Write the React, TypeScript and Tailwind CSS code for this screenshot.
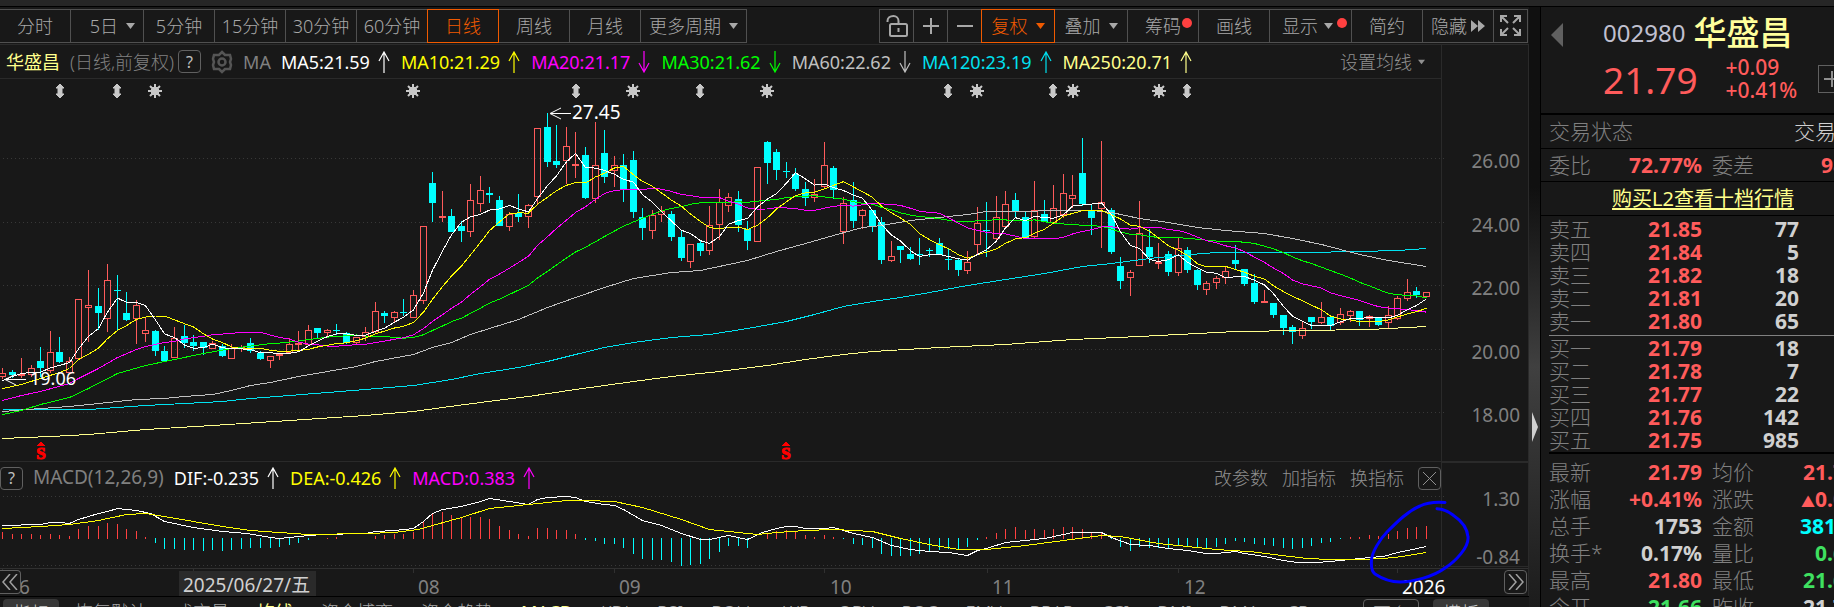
import type { ReactNode } from 'react';

// [涨跌(1 涨 / 0 跌), 最高, 实体上沿, 实体下沿, 最低]，均为图表坐标
type Candle = [number, number, number, number, number];
type Point = [number, number];

const CANDLES: Candle[] = [
  [1, 368, 373, 377, 379], [0, 370, 372, 375, 378], [1, 358, 374, 375, 378], [1, 365, 368, 375, 377], [0, 347, 361, 368, 377],
  [1, 331, 352, 371, 373], [0, 337, 352, 362, 363], [1, 357, 361, 373, 373], [1, 299, 299, 359, 359], [1, 270, 305, 308, 342],
  [0, 288, 306, 313, 330], [1, 264, 280, 319, 332], [0, 275, 290, 291, 330], [0, 292, 313, 320, 321], [1, 300, 305, 319, 344],
  [1, 318, 330, 334, 342], [0, 330, 331, 351, 356], [0, 346, 351, 361, 361], [1, 327, 338, 358, 358], [0, 325, 336, 343, 348],
  [0, 335, 342, 346, 351], [0, 342, 342, 348, 355], [1, 341, 343, 349, 349], [0, 344, 346, 356, 357], [1, 344, 348, 359, 359],
  [1, 345, 347, 348, 352], [0, 338, 343, 351, 353], [0, 351, 353, 359, 360], [1, 356, 356, 361, 368], [1, 353, 354, 356, 360],
  [1, 338, 344, 353, 354], [1, 331, 343, 344, 352], [1, 325, 330, 345, 345], [0, 328, 328, 333, 338], [1, 329, 330, 333, 336],
  [0, 324, 330, 331, 335], [0, 332, 333, 343, 344], [1, 337, 337, 343, 344], [1, 327, 332, 337, 341], [1, 302, 311, 332, 333],
  [0, 311, 313, 316, 323], [1, 311, 312, 318, 322], [0, 299, 312, 313, 316], [1, 290, 295, 318, 318], [1, 226, 226, 301, 304],
  [0, 172, 183, 203, 222], [1, 191, 216, 217, 222], [0, 209, 216, 232, 232], [0, 221, 226, 231, 242], [1, 184, 200, 232, 237],
  [1, 176, 190, 204, 212], [0, 187, 193, 195, 203], [0, 196, 200, 226, 226], [1, 212, 214, 227, 231], [0, 194, 213, 217, 222],
  [1, 204, 205, 217, 228], [1, 128, 128, 197, 204], [0, 113, 127, 162, 167], [0, 125, 161, 165, 168], [1, 127, 146, 161, 184],
  [1, 132, 164, 166, 178], [0, 147, 155, 198, 199], [1, 122, 165, 199, 203], [0, 130, 153, 177, 183], [1, 156, 165, 171, 187],
  [0, 154, 165, 189, 202], [0, 151, 160, 212, 218], [0, 208, 217, 228, 240], [1, 210, 215, 231, 239], [1, 206, 211, 215, 222],
  [0, 211, 214, 237, 241], [0, 231, 237, 258, 261], [1, 244, 244, 262, 268], [0, 240, 243, 251, 256], [1, 206, 225, 251, 255],
  [1, 189, 202, 225, 240], [1, 193, 197, 206, 212], [0, 191, 199, 225, 232], [0, 221, 229, 241, 250], [1, 167, 167, 242, 242],
  [0, 141, 142, 163, 184], [0, 149, 152, 170, 180], [0, 162, 171, 172, 178], [0, 168, 174, 189, 191], [0, 182, 189, 198, 206],
  [1, 179, 194, 198, 202], [1, 142, 165, 187, 188], [0, 166, 168, 190, 199], [1, 197, 203, 232, 244], [0, 182, 200, 221, 228],
  [1, 209, 210, 216, 229], [0, 210, 210, 226, 232], [0, 217, 222, 260, 264], [1, 241, 256, 261, 262], [0, 246, 246, 250, 263],
  [0, 247, 254, 259, 260], [0, 238, 254, 255, 265], [0, 248, 250, 251, 257], [0, 238, 243, 255, 255], [0, 249, 259, 260, 270],
  [0, 259, 260, 270, 276], [1, 251, 262, 271, 274], [1, 207, 223, 245, 255], [0, 202, 230, 231, 257], [1, 196, 217, 239, 242],
  [1, 191, 204, 227, 228], [0, 193, 200, 211, 218], [0, 212, 217, 238, 238], [1, 181, 210, 237, 238], [0, 200, 214, 222, 222],
  [1, 185, 208, 223, 224], [1, 174, 193, 215, 218], [1, 175, 195, 199, 208], [0, 138, 173, 204, 206], [0, 205, 211, 218, 235],
  [1, 141, 202, 209, 248], [0, 208, 210, 252, 254], [0, 257, 266, 281, 289], [1, 270, 272, 278, 296], [1, 201, 233, 266, 266],
  [0, 229, 247, 257, 263], [1, 243, 262, 264, 269], [0, 251, 254, 272, 276], [1, 238, 248, 273, 276], [0, 247, 250, 270, 273],
  [0, 269, 270, 285, 290], [1, 281, 283, 290, 295], [1, 276, 278, 283, 289], [1, 267, 271, 278, 284], [0, 245, 260, 264, 269],
  [0, 269, 269, 284, 286], [0, 274, 283, 302, 304], [1, 290, 301, 302, 302], [0, 303, 303, 315, 318], [0, 315, 315, 328, 335],
  [0, 325, 327, 332, 344], [1, 322, 328, 336, 339], [0, 317, 317, 322, 329], [1, 302, 317, 323, 324], [0, 316, 317, 326, 330],
  [1, 308, 314, 323, 325], [1, 310, 311, 316, 322], [0, 311, 311, 320, 326], [1, 315, 316, 319, 327], [0, 317, 318, 325, 326],
  [1, 306, 315, 323, 328], [1, 296, 298, 319, 320], [1, 279, 292, 299, 301], [0, 287, 291, 295, 298], [1, 292, 292, 297, 297],
];

// 均线起始段（窗口左侧数据不足时使用）
const MA5_HEAD: Point[] = [[0, 380], [1, 376], [2, 373], [3, 372]];
const MA10_HEAD: Point[] = [[0, 388], [2, 384], [4, 378], [6, 372], [7, 368], [8, 359]];
const MA20_HEAD: Point[] = [[0, 400], [2, 395], [4, 391], [7, 383], [8, 378], [10, 368], [12, 357], [14, 349], [15, 346], [17, 342], [18, 341]];
const MA30_HEAD: Point[] = [[0, 414], [2, 410], [4, 404], [7, 397], [9, 388], [12, 373], [15, 365], [18, 359], [21, 353], [24, 348], [28, 343]];

const MA60: Point[] = [
  [0, 411], [4, 408], [7, 406], [10, 403], [14, 399], [17, 398], [19, 396], [22, 394], [24, 390], [26, 385], [28, 382], [31, 376],
  [34, 371], [37, 366], [39, 361], [43, 354], [45, 347], [47, 342], [49, 334], [51, 328], [54, 319], [57, 307], [60, 297], [63, 287],
  [66, 278], [70, 272], [73, 270], [76, 264], [78, 260], [81, 251], [84, 243], [87, 235], [90, 227], [92, 225], [95, 220], [98, 217],
  [101, 214], [103, 211], [114, 210], [116, 212], [119, 218], [122, 222], [125, 227], [128, 230], [132, 233], [135, 238], [138, 244],
  [142, 254], [145, 260], [147, 263], [149, 266],
];
const MA120: Point[] = [
  [0, 409], [9, 409], [12, 407], [15, 405], [19, 403], [23, 401], [26, 398], [30, 395], [34, 392], [38, 389], [43, 385], [47, 379],
  [50, 373], [54, 367], [57, 361], [60, 354], [63, 347], [66, 342], [70, 337], [74, 334], [78, 328], [82, 321], [85, 314], [88, 306],
  [91, 301], [94, 297], [97, 292], [101, 285], [105, 279], [109, 273], [113, 266], [116, 263], [120, 258], [123, 255], [127, 252],
  [136, 252], [142, 251], [146, 250], [149, 248],
];
const MA250: Point[] = [
  [0, 438], [5, 436], [9, 434], [15, 429], [22, 425], [30, 420], [38, 415], [43, 411], [46, 407], [50, 402], [55, 396], [60, 389],
  [66, 381], [70, 376], [75, 371], [80, 365], [84, 359], [88, 354], [91, 351], [98, 347], [105, 344], [112, 339], [119, 336],
  [125, 333], [129, 331], [136, 330], [143, 329], [149, 326],
];

const MACD_BARS = [
  7, 5, 5, 5, 4, 5, 4, 3, 10, 13, 13, 16, 15, 10, 8, 2, -5, -11, -11, -12, -12, -13, -12, -13, -12, -11, -10, -10, -10, -9,
  -7, -5, -2, 0, 1, 2, 0, 0, 0, 3, 4, 5, 5, 7, 17, 25, 27, 24, 21, 22, 22, 20, 13, 9, 5, 3, 11, 11, 9, 9,
  5, -2, -3, -6, -6, -10, -16, -21, -22, -22, -24, -28, -27, -26, -21, -14, -8, -8, -10, 0, 6, 8, 9, 7, 4, 2, 4, 2, -1, -6,
  -7, -10, -16, -18, -18, -18, -16, -14, -12, -11, -11, -9, -2, 2, 6, 10, 12, 9, 10, 9, 10, 12, 12, 10, 7, 7, -1, -9, -13, -9,
  -10, -10, -11, -8, -8, -10, -10, -9, -6, -3, -4, -6, -7, -8, -10, -11, -10, -8, -5, -4, -1, 2, 2, 4, 3, 5, 8, 11, 12, 13,
];
const DIF: Point[] = [
  [0, 525], [4, 524], [5, 522], [6, 522], [7, 523], [8, 519], [10, 513], [11, 511], [12, 508], [14, 510], [15.5, 513], [17, 521],
  [20, 527], [23, 531], [25.5, 533], [28, 537], [29, 538], [31, 536], [33.5, 534], [38, 533], [39, 531], [41, 530], [43, 528],
  [44, 521], [45, 513], [46, 509], [48, 506], [50, 501], [51, 498], [53, 501], [55, 504], [56, 499], [57, 497], [59, 496], [60, 497],
  [61, 501], [63, 504], [64, 505], [65, 509], [67, 520], [69, 525], [71, 533], [73, 539], [74, 539], [76, 535], [78, 539], [79.5, 532],
  [81, 528], [82, 526], [83, 526], [84, 528], [86, 528], [87, 527], [89, 533], [91, 537], [93, 545], [95, 549], [97, 551], [99, 552],
  [101, 555], [102, 550], [103, 548], [105, 542], [108, 539], [109, 538], [111, 534], [112, 532], [115, 532], [116, 537], [118, 544],
  [120, 545], [122, 548], [124, 550], [126, 553], [127, 553], [129, 551], [130, 553], [132, 556], [134, 560], [135.5, 562],
  [137.5, 562], [139, 561], [141, 559], [143, 557], [144.5, 556], [146, 552], [147, 550], [149, 546],
];
const DEA: Point[] = [
  [0, 528], [4, 526], [7, 524], [10, 520], [13, 514], [15, 513], [17, 516], [20, 521], [23, 526], [26, 530], [29, 532], [32, 534],
  [38, 533], [41, 532], [43.5, 529], [45, 525], [48, 517], [51, 508], [54, 505], [57, 502], [59, 500], [61, 500], [64, 501], [67, 507],
  [71, 519], [74, 529], [77, 532], [79, 534], [81, 532], [84, 530], [87, 529], [89, 530], [91, 531], [94, 538], [97, 544], [100, 549],
  [103, 549], [107, 545], [111, 540], [115, 535], [117, 536], [121, 543], [124, 546], [127, 549], [128.5, 550], [130.5, 551],
  [133, 554], [136.5, 558], [139, 559], [142, 559], [144.5, 558], [146.5, 556], [149, 552],
];

const xAt = (i: number) => Math.round(2 + 9.557 * i) + 0.5;
const toPoints = (pts: Point[]) => pts.map(([i, y]) => `${xAt(i)},${y + 0.5}`).join(' ');

const closes = CANDLES.map(([up, , top, bottom]) => (up ? top : bottom));

function movingAverage(n: number, head: Point[]): Point[] {
  const out = [...head];
  for (let i = n - 1; i < closes.length; i++) {
    const sum = closes.slice(i - n + 1, i + 1).reduce((a, b) => a + b, 0);
    out.push([i, sum / n]);
  }
  return out;
}

const LINES: { color: string; points: Point[] }[] = [
  { color: '#ffff8c', points: MA250 },
  { color: '#00e1f0', points: MA120 },
  { color: '#c0c0c0', points: MA60 },
  { color: '#00ff00', points: movingAverage(30, MA30_HEAD) },
  { color: '#ff00ff', points: movingAverage(20, MA20_HEAD) },
  { color: '#ffff00', points: movingAverage(10, MA10_HEAD) },
  { color: '#ffffff', points: movingAverage(5, MA5_HEAD) },
];

const STARS = [155, 413, 633, 767, 977, 1073, 1159];
const DOUBLE_ARROWS = [60, 117, 576, 700, 948, 1053, 1187];

const MA_LEGEND = [
  { text: 'MA5:21.59', up: true, cls: 'text-white' },
  { text: 'MA10:21.29', up: true, cls: 'text-[#ffff00]' },
  { text: 'MA20:21.17', up: false, cls: 'text-[#ff00ff]' },
  { text: 'MA30:21.62', up: false, cls: 'text-[#00ff00]' },
  { text: 'MA60:22.62', up: false, cls: 'text-[#c0c0c0]' },
  { text: 'MA120:23.19', up: true, cls: 'text-[#00e1f0]' },
  { text: 'MA250:20.71', up: true, cls: 'text-[#ffff8c]' },
];

const MACD_LEGEND = [
  { text: 'DIF:-0.235', up: true, cls: 'text-white' },
  { text: 'DEA:-0.426', up: true, cls: 'text-[#ffff00]' },
  { text: 'MACD:0.383', up: true, cls: 'text-[#ff00ff]' },
];

const SELLS = [['卖五', '21.85', '77'], ['卖四', '21.84', '5'], ['卖三', '21.82', '18'], ['卖二', '21.81', '20'], ['卖一', '21.80', '65']];
const BUYS = [['买一', '21.79', '18'], ['买二', '21.78', '7'], ['买三', '21.77', '22'], ['买四', '21.76', '142'], ['买五', '21.75', '985']];

const RED = 'text-[#ff5b5b]';
const GREEN = 'text-[#3fe060]';
const LIGHT = 'text-[#d0d0d0]';
const STATS = [
  ['最新', '21.79', RED, '均价', '21.73', RED],
  ['涨幅', '+0.41%', RED, '涨跌', '▲0.09', RED],
  ['总手', '1753', LIGHT, '金额', '381万', 'text-[#00ffff]'],
  ['换手*', '0.17%', LIGHT, '量比', '0.62', GREEN],
  ['最高', '21.80', RED, '最低', '21.66', GREEN],
  ['今开', '21.66', GREEN, '昨收', '21.70', LIGHT],
];

const TABS = ['恢复默认', '成交量', '均线', '资金博弈', '资金趋势', 'MACD', 'KDJ', 'RSI', 'BOLL', 'WR', 'OBV', 'ROC', 'EMV', 'BRAR', 'CCI', 'DMI', 'DMA', 'CR'];

function Caret({ small }: { small?: boolean }) {
  return (
    <svg width={small ? 7 : 9} height={6} viewBox="0 0 9 6" fill="currentColor" className="shrink-0">
      <path d="M0 0h9L4.5 6z" />
    </svg>
  );
}

function TrendArrow({ up }: { up: boolean }) {
  return (
    <svg width={12} height={22} viewBox="0 0 12 22" fill="none" stroke="currentColor" strokeWidth={1.2} className="shrink-0">
      <path d={up ? 'M6 22V1M1 10L6 1l5 9' : 'M6 0v21M1 12l5 9 5-9'} />
    </svg>
  );
}

function ToolButton({ children, active, className }: { children: ReactNode; active?: boolean; className: string }) {
  return (
    <button
      type="button"
      className={`relative -ml-px flex h-[34px] shrink-0 items-center border ${active ? 'z-10 border-[#f05a00] text-[#f05a00]' : 'border-[#505050] text-[#a8a8a8]'} ${className}`}
    >
      {children}
    </button>
  );
}

function Toolbar() {
  return (
    <div className="flex h-[38px] items-center justify-between overflow-hidden border-b border-[#2a2a2a] pr-px">
      <div className="flex">
        <ToolButton className="w-[72px] justify-center">分时</ToolButton>
        <ToolButton className="w-[74px] justify-end gap-2 pr-2">5日 <Caret /></ToolButton>
        <ToolButton className="w-[72px] justify-center">5分钟</ToolButton>
        <ToolButton className="w-[72px] justify-center">15分钟</ToolButton>
        <ToolButton className="w-[72px] justify-center">30分钟</ToolButton>
        <ToolButton className="w-[72px] justify-center">60分钟</ToolButton>
        <ToolButton active className="w-[72px] justify-center">日线</ToolButton>
        <ToolButton className="w-[72px] justify-center">周线</ToolButton>
        <ToolButton className="w-[72px] justify-center">月线</ToolButton>
        <ToolButton className="w-[107px] justify-center gap-2">更多周期 <Caret /></ToolButton>
      </div>
      <div className="flex">
        <ToolButton className="w-[35px] justify-center">
          <svg width={22} height={24} viewBox="0 0 22 24" fill="none" stroke="currentColor" strokeWidth={2}>
            <rect x={4} y={10} width={17} height={12} rx={1.5} />
            <path d="M12.5 10V7a5 5 0 0 0-5-5C4 2 1.5 4 1.5 7v1M12.5 14v4" />
          </svg>
        </ToolButton>
        <ToolButton className="w-[35px] justify-center">
          <svg width={18} height={18} viewBox="0 0 18 18" stroke="currentColor" strokeWidth={2}><path d="M1 9h16M9 1v16" /></svg>
        </ToolButton>
        <ToolButton className="w-[35px] justify-center">
          <svg width={18} height={18} viewBox="0 0 18 18" stroke="currentColor" strokeWidth={2}><path d="M1 9h16" /></svg>
        </ToolButton>
        <ToolButton active className="w-[74px] justify-center gap-2">复权 <Caret /></ToolButton>
        <ToolButton className="w-[74px] justify-center gap-2">叠加 <Caret /></ToolButton>
        <ToolButton className="w-[72px] justify-center">
          筹码
          <span className="absolute top-2 right-1.5 h-2.5 w-2.5 rounded-full bg-[#ff4040]" />
        </ToolButton>
        <ToolButton className="w-[72px] justify-center">画线</ToolButton>
        <ToolButton className="w-[83px] gap-1.5 pl-3">
          显示 <Caret />
          <span className="absolute top-2 right-1 h-2.5 w-2.5 rounded-full bg-[#ff4040]" />
        </ToolButton>
        <ToolButton className="w-[72px] justify-center">简约</ToolButton>
        <ToolButton className="w-[72px] justify-center gap-1">
          隐藏
          <svg width={14} height={12} viewBox="0 0 14 12" fill="currentColor"><path d="M0 0l7 6-7 6zM7 0l7 6-7 6z" /></svg>
        </ToolButton>
        <ToolButton className="w-[35px] justify-center">
          <svg width={21} height={21} viewBox="0 0 21 21" fill="none" stroke="currentColor" strokeWidth={2}>
            <path d="M1 7V1h6M1 1l7 7M14 1h6v6M20 1l-7 7M1 14v6h6M1 20l7-7M20 14v6h-6M20 20l-7-7" />
          </svg>
        </ToolButton>
      </div>
    </div>
  );
}

function HelpButton() {
  return (
    <button type="button" className="h-[23px] w-[23px] shrink-0 rounded-sm border border-[#606060] text-base leading-5 font-normal text-[#c0c0c0]">
      ?
    </button>
  );
}

function Legend({ items }: { items: typeof MA_LEGEND }) {
  return (
    <div className="flex gap-[11px]">
      {items.map((it) => (
        <span key={it.text} className={`flex items-center gap-2 font-normal ${it.cls}`}>
          {it.text}
          <TrendArrow up={it.up} />
        </span>
      ))}
    </div>
  );
}

function CandleChart() {
  return (
    <svg viewBox="0 79 1529 382" className="block w-full overflow-visible font-normal" shapeRendering="crispEdges">
      {[158.5, 222.5, 285.5, 349.5, 412.5].map((y, i) => (
        <g key={y}>
          <path d={`M3 ${y}H1446`} stroke="#383838" strokeDasharray="1 3" />
          <text x={1520} y={y + 9} textAnchor="end" className="fill-[#808080] text-[19px]">{26 - i * 2}.00</text>
        </g>
      ))}
      <path d="M1441.5 79V461M1528.5 79V461" stroke="#2a2a2a" />

      {STARS.map((x) => (
        <path
          key={x}
          transform={`translate(${x} 91)`}
          d="M0-7V7M-7 0H7M-5-5L5 5M-5 5L5-5M-3-3H3V3H-3z"
          stroke="#c8c8c8"
          strokeWidth={2}
          fill="#c8c8c8"
          shapeRendering="auto"
        />
      ))}
      {DOUBLE_ARROWS.map((x) => (
        <path key={x} transform={`translate(${x} 91)`} d="M0-7L4-3H2V3H4L0 7L-4 3H-2V-3H-4z" fill="#c8c8c8" stroke="#c8c8c8" shapeRendering="auto" />
      ))}

      {CANDLES.map(([up, high, top, bottom, low], i) => {
        const x = xAt(i);
        if (!up) {
          return (
            <g key={i} fill="#00ffff">
              <rect x={x - 0.5} y={high} width={1} height={Math.max(low - high, 1)} />
              <rect x={x - 3.5} y={top} width={7} height={Math.max(bottom - top, 1)} />
            </g>
          );
        }
        return (
          <g key={i} stroke="#ff5b5b" fill="none">
            <path d={`M${x} ${high}V${top}M${x} ${bottom}V${low}`} />
            <rect x={x - 3} y={top + 0.5} width={6} height={Math.max(bottom - top - 1, 0.5)} />
          </g>
        );
      })}

      {LINES.map((l) => (
        <polyline key={l.color} points={toPoints(l.points)} fill="none" stroke={l.color} />
      ))}

      <g stroke="#fff" fill="none" shapeRendering="auto">
        <path d="M571 113.5H551M561 108l-11 5.5 11 5.5" />
        <path d="M26 379.5H6M16 374l-11 5.5 11 5.5" />
      </g>
      <text x={572} y={119} className="fill-white text-[19px]">27.45</text>
      <text x={30} y={385} className="fill-white text-[18px]">19.06</text>

      {[41, 786].map((x) => (
        <g key={x} fill="#ff0000">
          <path d={`M${x - 5} 446l5-4 5 4z`} />
          <text x={x} y={459} textAnchor="middle" stroke="#ff0000" className="font-['Liberation_Serif',serif] text-[17px] font-bold">S</text>
        </g>
      ))}
    </svg>
  );
}

function MacdChart() {
  return (
    <svg viewBox="0 494 1529 102" className="block w-full overflow-visible font-normal" shapeRendering="crispEdges">
      <path d="M3 496.5H1446M3 565.5H1446" stroke="#383838" strokeDasharray="1 3" />
      <path d="M1441.5 494V567M1528.5 494V596M1442 566.5H1528" stroke="#2a2a2a" />
      <path d="M0 568.5H1528M2.5 568v5M193.5 568v5M413.5 568v5M614.5 568v5M824.5 568v5M987.5 568v5M1178.5 568v5M1397.5 568v5" stroke="#303030" />
      <g textAnchor="end" className="fill-[#808080] text-[19px]">
        <text x={1520} y={506}>1.30</text>
        <text x={1520} y={564}>-0.84</text>
      </g>

      {MACD_BARS.map((v, i) => (
        v !== 0 && <rect key={i} x={xAt(i) - 0.5} y={v > 0 ? 539 - v : 538} width={1} height={Math.abs(v)} fill={v > 0 ? '#ff4040' : '#00ffff'} />
      ))}
      <polyline points={toPoints(DIF)} fill="none" stroke="#fff" />
      <polyline points={toPoints(DEA)} fill="none" stroke="#ffff00" />

      <g className="fill-[#808080] text-[19px]">
        <text x={19} y={594}>6</text>
        <text x={418} y={594}>08</text>
        <text x={619} y={594}>09</text>
        <text x={830} y={594}>10</text>
        <text x={992} y={594}>11</text>
        <text x={1184} y={594}>12</text>
        <text x={1402} y={594} className="fill-white">2026</text>
      </g>
      <rect x={179} y={571} width={137} height={25} fill="#2a2a2a" />
      <text x={183} y={592} className="fill-[#d0d0d0] text-[19px]">2025/06/27/五</text>

      {/* 手绘圈注 */}
      <path
        d="M1445 502.5C1438 502 1428 502 1420 506C1408 511 1398 521 1387 532C1380 539 1372 552 1371.5 560C1371 566 1371 571 1375 574C1381 578 1388 582 1400 582C1412 582 1433 577 1445 568C1456 561 1469 547 1468 537C1467 524 1456 517 1453 515C1448 511 1444 509 1437 508.7"
        fill="none"
        stroke="#0000ff"
        strokeWidth={3}
        strokeLinecap="round"
        shapeRendering="auto"
      />
    </svg>
  );
}

function BookRow({ row }: { row: string[] }) {
  return (
    <tr className="h-[23px]">
      <td className="w-[74px] p-0 text-[#808080]">{row[0]}</td>
      <td className="w-[79px] p-0 text-right font-bold text-[#ff5b5b]">{row[1]}</td>
      <td className="w-[97px] p-0 text-right font-bold text-[#d0d0d0]">{row[2]}</td>
      <td />
    </tr>
  );
}

function QuotePanel() {
  return (
    <aside className="w-[293px] shrink-0 overflow-hidden bg-[#181818] text-[21px] leading-[23px]">
      <div className="w-[316px]">
        <div className="flex h-[108px] border-b-2 border-black pt-2 pl-2.5">
          <button type="button" aria-label="上一只" className="mt-2 h-6 w-3">
            <svg width={12} height={24} viewBox="0 0 12 24" fill="#606060"><path d="M12 0v24L0 12z" /></svg>
          </button>
          <div className="ml-10 shrink-0">
            <div className="flex h-9 items-center gap-2 whitespace-nowrap">
              <span className="text-2xl font-normal text-[#c0c0d0]">002980</span>
              <span className="text-[33px] leading-9 font-medium text-[#ffff9c]">华盛昌</span>
            </div>
            <div className="flex h-[56px] items-center">
              <span className="text-[37px] font-normal text-[#ff5b5b]">21.79</span>
              <span className="ml-7 w-[92px] font-medium text-[#ff5b5b]">+0.09<br />+0.41%</span>
              <button type="button" aria-label="加自选" className="grid h-7 w-7 shrink-0 place-items-center border border-[#606060]">
                <svg width={16} height={16} viewBox="0 0 16 16" stroke="#909090" strokeWidth={2}><path d="M0 8h16M8 0v16" /></svg>
              </button>
            </div>
          </div>
        </div>

        <div className="flex h-[34px] items-center justify-between border-b border-black pl-2">
          <span className="text-[#808080]">交易状态</span>
          <span className="text-[#d0d0d0]">交易中</span>
        </div>
        <div className="flex h-[33px] items-center border-b border-black pl-2">
          <span className="w-[74px] text-[#808080]">委比</span>
          <span className="w-[79px] text-right font-bold text-[#ff5b5b]">72.77%</span>
          <span className="ml-2.5 text-[#808080]">委差</span>
          <span className="ml-auto font-bold text-[#ff5b5b]">989</span>
        </div>
        <div className="flex h-[34px] items-center justify-center border-b border-black pl-2">
          <a href="#l2" className="text-xl font-normal text-[#ffff8c] underline underline-offset-2">购买L2查看十档行情</a>
        </div>

        <div className="ml-2 border-b-2 border-black">
          <div className="border-b border-[#808080] py-0.5">
            <table className="w-full border-collapse">
              <tbody>{SELLS.map((r) => <BookRow key={r[0]} row={r} />)}</tbody>
            </table>
          </div>
          <div className="pt-px">
            <table className="w-full border-collapse">
              <tbody>{BUYS.map((r) => <BookRow key={r[0]} row={r} />)}</tbody>
            </table>
          </div>
        </div>

        <table className="mt-[5px] ml-2 w-[308px] border-collapse">
          <tbody>
            {STATS.map(([l1, v1, c1, l2, v2, c2]) => (
              <tr key={l1} className="h-[27px]">
                <td className="w-[64px] p-0 text-[#808080]">{l1}</td>
                <td className={`w-[89px] p-0 text-right font-bold ${c1}`}>{v1}</td>
                <td className="w-[64px] p-0 pl-2.5 text-[#808080]">{l2}</td>
                <td className={`p-0 text-right font-bold ${c2}`}>
                  {v2.startsWith('▲') ? <><span className="text-sm">▲</span>{v2.slice(1)}</> : v2}
                </td>
              </tr>
            ))}
          </tbody>
        </table>
      </div>
    </aside>
  );
}

export default function App() {
  return (
    <div className="flex h-screen flex-col overflow-hidden bg-[#181818] font-['Noto_Sans','Noto_Sans_CJK_SC',sans-serif] text-lg font-light whitespace-nowrap">
      <div className="h-[7px] shrink-0 border-b border-black bg-[#262626]" />
      <div className="flex min-h-0 flex-1">
        <main className="min-w-0 flex-1">
          <Toolbar />

          <div className="flex h-[34px] border-r border-[#2a2a2a]">
            <div className="flex flex-1 items-center gap-2.5 border-b border-[#2a2a2a] pl-1.5">
              <span className="font-normal text-[#ffff8c]">华盛昌</span>
              <div className="flex items-center gap-1">
                <span className="text-[#808080]">(日线,前复权)</span>
                <HelpButton />
              </div>
              <button type="button" aria-label="设置">
                <svg width={22} height={24} viewBox="0 0 22 24" fill="none" stroke="#555" strokeWidth={2.5}>
                  <path d="M11 2l3 3h5l1 4-1 3 1 3-1 4h-5l-3 3-3-3H3l-1-4 1-3-1-3 1-4h5z" />
                  <circle cx={11} cy={12} r={3.5} strokeWidth={2.5} />
                </svg>
              </button>
              <span className="font-normal text-[#808080]">MA</span>
              <Legend items={MA_LEGEND} />
              <button type="button" className="ml-auto flex items-center gap-1.5 pr-4 text-[#909090]">设置均线 <Caret small /></button>
            </div>
            <div className="w-[87px] border-l border-[#2a2a2a]" />
          </div>

          <CandleChart />

          <div className="flex h-[33px] border-t border-r border-[#2a2a2a]">
            <div className="flex flex-1 items-center gap-2.5">
              <HelpButton />
              <span className="text-[19px] font-normal text-[#808080]">MACD(12,26,9)</span>
              <Legend items={MACD_LEGEND} />
              <div className="ml-auto flex items-center gap-3.5 text-[#909090]">
                <button type="button">改参数</button>
                <button type="button">加指标</button>
                <button type="button">换指标</button>
                <button type="button" aria-label="关闭" className="grid h-[23px] w-[23px] place-items-center rounded-sm border border-[#606060]">
                  <svg width={13} height={13} viewBox="0 0 13 13" stroke="currentColor"><path d="M0 0l13 13M13 0L0 13" /></svg>
                </button>
              </div>
            </div>
            <div className="w-[87px] border-t border-l border-[#2a2a2a]" />
          </div>

          <div className="relative border-b border-black">
            <MacdChart />
            <button type="button" aria-label="向前" className="absolute bottom-0.5 left-0 grid h-6 w-[21px] place-items-center rounded-r-sm border border-l-0 border-[#606060] bg-[#181818]">
              <svg width={16} height={16} viewBox="0 0 16 16" fill="none" stroke="#a0a0a0" strokeWidth={1.5}><path d="M8 0L1 8l7 8M15 0L8 8l7 8" /></svg>
            </button>
            <button type="button" aria-label="向后" className="absolute right-0.5 bottom-0.5 grid h-6 w-[23px] place-items-center rounded-sm border border-[#606060] bg-[#181818]">
              <svg width={16} height={16} viewBox="0 0 16 16" fill="none" stroke="#a0a0a0" strokeWidth={1.5}><path d="M1 0l7 8-7 8M8 0l7 8-7 8" /></svg>
            </button>
          </div>

          <div className="flex h-[30px] items-center gap-7 pr-10 pl-[3px] text-[#a8a8a8]">
            <button type="button" className="-mr-3 h-[26px] w-14 shrink-0 rounded-sm bg-[#383838] text-[#d0d0d0]">指标</button>
            {TABS.map((t) => (
              <button key={t} type="button" className={t === '均线' || t === 'MACD' ? 'font-normal text-[#ffff8c]' : ''}>{t}</button>
            ))}
            <div className="ml-auto flex gap-3.5">
              <button type="button" className="h-[26px] w-14 rounded-sm border border-[#606060]">更多</button>
              <button type="button" className="h-[26px] w-14 rounded-sm bg-[#383838] text-[#d0d0d0]">模板</button>
            </div>
          </div>
        </main>

        <div className="flex w-3 shrink-0 items-center border-r border-black bg-linear-to-b from-[#101010] from-30% via-[#404040] via-60% to-[#1c1c1c]">
          <button type="button" aria-label="收起侧栏" className="mt-60 ml-[3px]">
            <svg width={6} height={30} viewBox="0 0 6 30" fill="#d0d0d0"><path d="M0 0l6 15-6 15z" /></svg>
          </button>
        </div>

        <QuotePanel />
      </div>
    </div>
  );
}
